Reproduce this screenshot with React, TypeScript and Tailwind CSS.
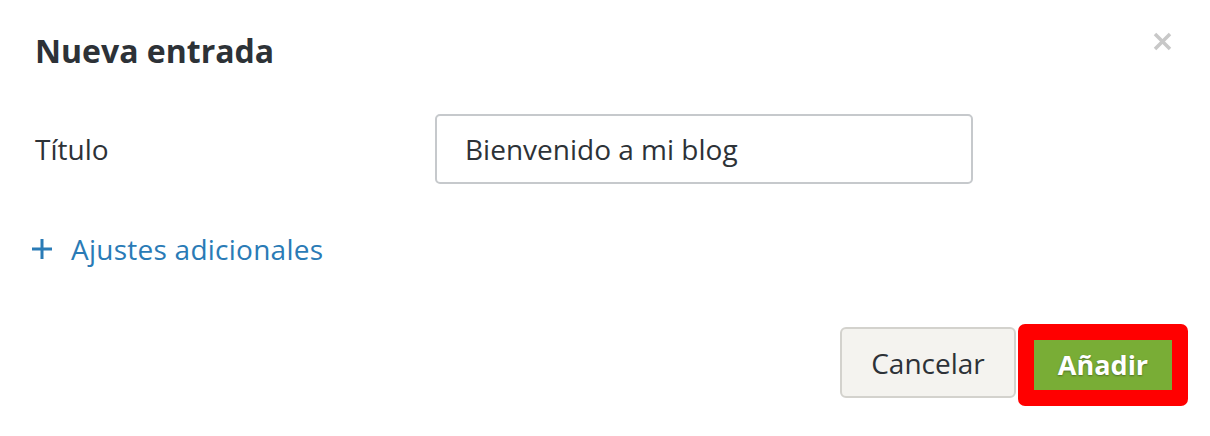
import React from "react";

export default function App() {
  return (
    <div className="relative h-[436px] w-[1210px] bg-white font-['Open_Sans',sans-serif] text-[#2d3237]">
      {/* header */}
      <div className="flex items-start justify-between pl-[35px] pr-[38px] pt-[31px]">
        <h1 className="text-[32px] font-bold leading-[40px]">Nueva entrada</h1>
        <button className="mt-[1px] text-[#c8c8c8]" aria-label="Cerrar">
          <svg width="19" height="19" viewBox="0 0 19 19">
            <path d="M2 2 L17 17 M17 2 L2 17" stroke="currentColor" strokeWidth="3.5" />
          </svg>
        </button>
      </div>

      {/* titulo */}
      <div className="mt-[43px] flex items-center pl-[35px]">
        <label className="w-[400px] text-[28px]">Título</label>
        <div className="flex h-[70px] w-[538px] items-center rounded-[5px] border-2 border-[#c6c9cc] px-[28px] text-[28px]">
          Bienvenido a mi blog
        </div>
      </div>

      {/* ajustes */}
      <div className="mt-[44px] flex items-center pl-[32px] text-[28px] tracking-[0.25px] text-[#2a7bb6]">
        <svg width="20" height="20" viewBox="0 0 20 20" className="mr-[19px]">
          <path d="M10 0 V20 M0 10 H20" stroke="currentColor" strokeWidth="3" />
        </svg>
        <span>Ajustes adicionales</span>
      </div>

      {/* botones */}
      <div className="mt-[54px] flex items-start justify-end gap-[2px] pr-[22px]">
        <button className="mt-[3px] h-[71px] w-[176px] rounded-[6px] border-2 border-[#d3d2cd] bg-[#f4f3ef] text-[28px] text-[#2d3237]">
          Cancelar
        </button>
        <div className="rounded-[7px] bg-[#ff0000] px-[16px] py-[16px]">
          <button className="h-[50px] w-[138px] bg-[#79ad36] text-[27px] font-bold text-white [text-shadow:0_1px_2px_rgba(0,0,0,0.35)]">
            Añadir
          </button>
        </div>
      </div>
    </div>
  );
}
